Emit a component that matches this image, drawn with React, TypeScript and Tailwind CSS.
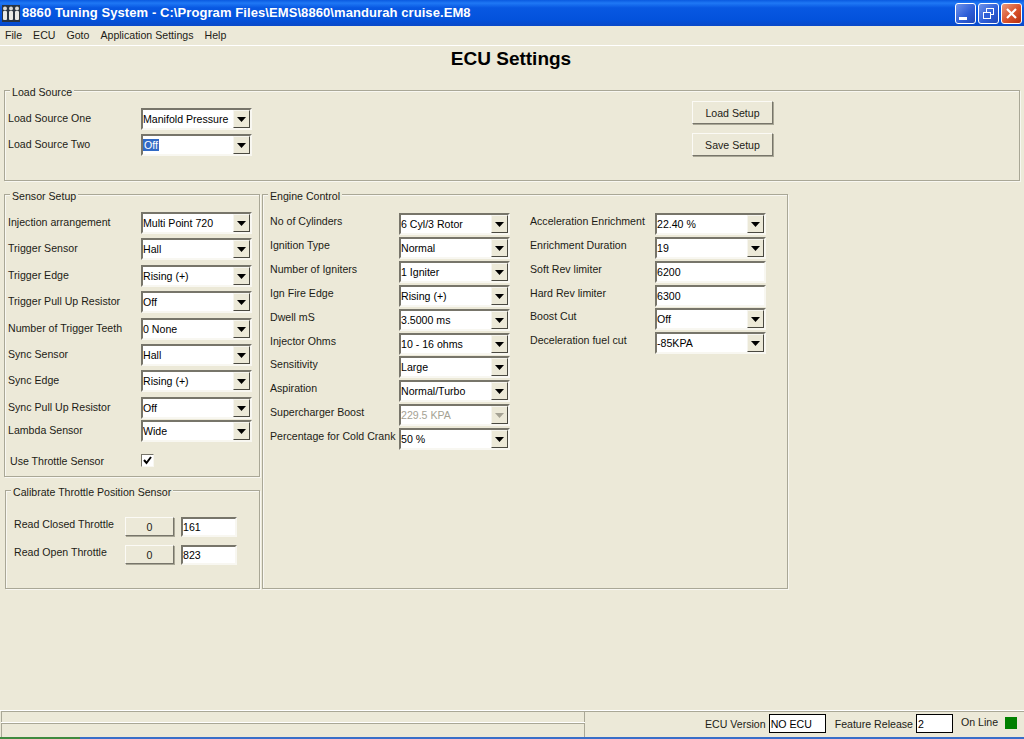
import type { ReactNode } from "react";

const font = "font-['Liberation_Sans',Arial,sans-serif]";

const sensorRows = [
  { label: "Injection arrangement", value: "Multi Point 720", gap: "mt-0" },
  { label: "Trigger Sensor", value: "Hall", gap: "mt-[4px]" },
  { label: "Trigger Edge", value: "Rising (+)", gap: "mt-[5px]" },
  { label: "Trigger Pull Up Resistor", value: "Off", gap: "mt-[4px]" },
  { label: "Number of Trigger Teeth", value: "0 None", gap: "mt-[5px]" },
  { label: "Sync Sensor", value: "Hall", gap: "mt-[4px]" },
  { label: "Sync Edge", value: "Rising (+)", gap: "mt-[4px]" },
  { label: "Sync Pull Up Resistor", value: "Off", gap: "mt-[5px]" },
  { label: "Lambda Sensor", value: "Wide", gap: "mt-[1px]" },
];

const engineRows = [
  { label: "No of Cylinders", value: "6 Cyl/3 Rotor", gap: "mt-0" },
  { label: "Ignition Type", value: "Normal", gap: "mt-[2px]" },
  { label: "Number of Igniters", value: "1 Igniter", gap: "mt-[2px]" },
  { label: "Ign Fire Edge", value: "Rising (+)", gap: "mt-[2px]" },
  { label: "Dwell mS", value: "3.5000 ms", gap: "mt-[2px]" },
  { label: "Injector Ohms", value: "10 - 16 ohms", gap: "mt-[2px]" },
  { label: "Sensitivity", value: "Large", gap: "mt-[1px]" },
  { label: "Aspiration", value: "Normal/Turbo", gap: "mt-[2px]" },
  { label: "Supercharger Boost", value: "229.5 KPA", gap: "mt-[2px]", disabled: true },
  { label: "Percentage for Cold Crank", value: "50 %", gap: "mt-[2px]" },
];

const enrichRows = [
  { label: "Acceleration Enrichment", value: "22.40 %", gap: "mt-0" },
  { label: "Enrichment Duration", value: "19", gap: "mt-[2px]" },
  { label: "Soft Rev limiter", value: "6200", gap: "mt-[2px]", text: true },
  { label: "Hard Rev limiter", value: "6300", gap: "mt-[2px]", text: true },
  { label: "Boost Cut", value: "Off", gap: "mt-[1px]" },
  { label: "Deceleration fuel cut", value: "-85KPA", gap: "mt-[2px]" },
];

const Sunken = ({ className, children }: { className: string; children: ReactNode }) => (
  <div
    className={`flex items-center border-2 border-t-[#77756a] border-l-[#77756a] border-b-[#f8f7f1] border-r-[#f8f7f1] bg-white text-black ${className}`}
  >
    {children}
  </div>
);

const Combo = ({
  value,
  disabled,
  selected,
}: {
  value: string;
  disabled?: boolean;
  selected?: boolean;
}) => (
  <Sunken className={`h-[22px] w-[111px] shrink-0 ${disabled ? "bg-[#ece9d8]" : ""}`}>
    <span className={`flex-1 truncate ${disabled ? "text-[#a5a294]" : ""}`}>
      {selected ? <span className="bg-[#316ac5] px-[1px] text-white">{value}</span> : value}
    </span>
    <span className="flex h-[18px] w-[17px] items-center justify-center border border-t-[#f6f5ef] border-l-[#f6f5ef] border-b-[#4a4941] border-r-[#4a4941] bg-[#ece9d8]">
      <svg width="9" height="5" viewBox="0 0 9 5">
        <polygon points="0,0 9,0 4.5,5" fill={disabled ? "#a5a294" : "#000"} />
      </svg>
    </span>
  </Sunken>
);

const Group = ({
  title,
  className,
  children,
}: {
  title: string;
  className: string;
  children: ReactNode;
}) => (
  <div className={`relative border border-[#a9a796] shadow-[inset_1px_1px_0_#f8f7f1,1px_1px_0_#f8f7f1] ${className}`}>
    <span className="absolute left-[5px] top-[-6px] bg-[#ece9d8] px-[2px] leading-[14px] text-[#1c1c16]">
      {title}
    </span>
    {children}
  </div>
);

const Button = ({ children, className }: { children: ReactNode; className: string }) => (
  <div
    className={`flex items-center justify-center border border-t-[#fbfaf5] border-l-[#fbfaf5] border-b-[#77756a] border-r-[#77756a] shadow-[1px_1px_0_#a9a796] ${className}`}
  >
    {children}
  </div>
);

const TitleButton = ({ children, red }: { children: ReactNode; red?: boolean }) => (
  <div
    className={`flex h-[21px] w-[21px] items-center justify-center rounded-[3px] border border-white ${
      red
        ? "bg-[linear-gradient(135deg,#e99a7c,#d9512a_55%,#b5300f)]"
        : "bg-[linear-gradient(135deg,#6f93ea,#2f5fd8_55%,#2148b8)]"
    }`}
  >
    {children}
  </div>
);

export default function App() {
  return (
    <div className={`${font} flex h-[739px] w-[1024px] flex-col overflow-hidden bg-[#ece9d8] text-[10.6px] leading-[14px] text-[#1c1c16]`}>
      {/* title bar */}
      <div className="flex h-[26px] shrink-0 items-center bg-[linear-gradient(180deg,#0a5ae0_0%,#1f78f5_12%,#0858e2_30%,#0352dc_75%,#0a49c8_100%)] pl-[2px] pr-[2px]">
        <svg width="18" height="17" viewBox="0 0 18 17" className="shrink-0">
          <rect width="18" height="17" fill="#2a3440" />
          <rect x="1" y="6" width="4" height="9" rx="1" fill="#e8e8e4" />
          <rect x="7" y="6" width="4" height="9" rx="1" fill="#e8e8e4" />
          <rect x="13" y="6" width="4" height="9" rx="1" fill="#e8e8e4" />
          <circle cx="3" cy="3.5" r="2" fill="#d8d8d4" />
          <circle cx="9" cy="3.5" r="2" fill="#d8d8d4" />
          <circle cx="15" cy="3.5" r="2" fill="#d8d8d4" />
        </svg>
        <span className="ml-[2px] whitespace-nowrap text-[13px] font-bold tracking-[0.08px] text-white">
          8860 Tuning System - C:\Program Files\EMS\8860\mandurah cruise.EM8
        </span>
        <div className="ml-auto flex gap-[2px]">
          <TitleButton>
            <span className="mr-[5px] mt-[10px] h-[3px] w-[8px] bg-white" />
          </TitleButton>
          <TitleButton>
            <svg width="13" height="13" viewBox="0 0 13 13" fill="none" stroke="#fff">
              <rect x="4.5" y="1.5" width="7" height="6" />
              <rect x="1.5" y="5.5" width="7" height="6" fill="#2f5fd8" />
            </svg>
          </TitleButton>
          <TitleButton red>
            <svg width="13" height="13" viewBox="0 0 13 13" stroke="#fff" strokeWidth="2.2">
              <path d="M2 2 L11 11 M11 2 L2 11" />
            </svg>
          </TitleButton>
        </div>
      </div>

      {/* menu */}
      <div className="flex h-[20px] shrink-0 items-center gap-[11px] border-b border-white pb-[2px] pl-[5px]">
        <span>File</span>
        <span>ECU</span>
        <span>Goto</span>
        <span>Application Settings</span>
        <span>Help</span>
      </div>

      <div className="flex flex-1 flex-col px-[4px]">
        <h1 className="mt-[1px] h-[24px] pr-[2px] text-center text-[19px] font-bold leading-[24px] text-black">
          ECU Settings
        </h1>

        {/* load source */}
        <Group title="Load Source" className="mt-[19px] flex h-[91px] w-[1016px] pl-[3px] pt-[17px]">
          <div className="flex flex-col gap-[4px]">
            <div className="flex items-center">
              <span className="w-[133px] pb-[2px]">Load Source One</span>
              <Combo value="Manifold Pressure" />
            </div>
            <div className="flex items-center">
              <span className="w-[133px] pb-[2px]">Load Source Two</span>
              <Combo value="Off" selected />
            </div>
          </div>
          <div className="ml-[440px] flex flex-col gap-[9px]">
            <Button className="-mt-[7px] h-[23px] w-[81px]">Load Setup</Button>
            <Button className="h-[23px] w-[81px]">Save Setup</Button>
          </div>
        </Group>

        <div className="mt-[13px] flex">
          <div className="w-[256px]">
            {/* sensor setup */}
            <Group title="Sensor Setup" className="h-[283px] pl-[3px] pt-[17px]">
              {sensorRows.map((row) => (
                <div key={row.label} className={`flex items-center ${row.gap}`}>
                  <span className="w-[133px] pb-[2px]">{row.label}</span>
                  <Combo value={row.value} />
                </div>
              ))}
              <div className="mt-[12px] flex h-[13px] items-center">
                <span className="ml-[2px] w-[131px] whitespace-nowrap">Use Throttle Sensor</span>
                <span className="flex h-[13px] w-[13px] items-center justify-center border border-t-[#77756a] border-l-[#77756a] border-b-[#f8f7f1] border-r-[#f8f7f1] bg-white">
                  <svg width="9" height="9" viewBox="0 0 9 9" fill="none" stroke="#000" strokeWidth="2">
                    <path d="M1 4 L3.5 7 L8 1" />
                  </svg>
                </span>
              </div>
            </Group>

            {/* throttle calibration */}
            <Group title="Calibrate Throttle Position Sensor" className="ml-[1px] mt-[13px] h-[99px] w-[255px] pl-[8px] pt-[26px]">
              <div className="flex items-center">
                <span className="w-[111px] whitespace-nowrap pb-[6px]">Read Closed Throttle</span>
                <Button className="h-[19px] w-[49px] self-start">0</Button>
                <Sunken className="ml-[7px] h-[20px] w-[56px]">161</Sunken>
              </div>
              <div className="mt-[8px] flex items-center">
                <span className="w-[111px] whitespace-nowrap pb-[6px]">Read Open Throttle</span>
                <Button className="h-[19px] w-[49px] self-start">0</Button>
                <Sunken className="ml-[7px] h-[20px] w-[56px]">823</Sunken>
              </div>
            </Group>
          </div>

          {/* engine control */}
          <Group title="Engine Control" className="ml-[2px] flex h-[395px] w-[526px] pl-[7px] pt-[18px]">
            <div className="flex w-[260px] flex-col">
              {engineRows.map((row) => (
                <div key={row.label} className={`flex items-center ${row.gap}`}>
                  <span className="w-[129px] whitespace-nowrap pb-[6px]">{row.label}</span>
                  <Combo value={row.value} disabled={row.disabled} />
                </div>
              ))}
            </div>
            <div className="flex w-[240px] flex-col">
              {enrichRows.map((row) => (
                <div key={row.label} className={`flex items-center ${row.gap}`}>
                  <span className="w-[125px] whitespace-nowrap pb-[6px]">{row.label}</span>
                  {row.text ? (
                    <Sunken className="h-[22px] w-[111px]">{row.value}</Sunken>
                  ) : (
                    <Combo value={row.value} />
                  )}
                </div>
              ))}
            </div>
          </Group>
        </div>
      </div>

      {/* status bar */}
      <div className="flex h-[27px] shrink-0 border-t border-white">
        <div className="flex h-full w-[585px] flex-col pl-[1px]">
          <div className="h-[12px] border-l border-r border-t border-[#a9a796]" />
          <div className="h-[14px] border-l border-r border-t border-[#a9a796] shadow-[0_-1px_0_#fff]" />
        </div>
        <div className="flex flex-1 items-center whitespace-nowrap border-t border-[#a9a796] pb-[2px] pl-[120px]">
          <span>ECU Version</span>
          <span className="ml-[3px] flex h-[19px] w-[57px] items-center border border-black bg-white pl-[1px] text-black">
            NO ECU
          </span>
          <span className="ml-[9px]">Feature Release</span>
          <span className="ml-[3px] flex h-[19px] w-[37px] items-center border border-black bg-white pl-[1px] text-black">
            2
          </span>
          <span className="ml-[8px] pb-[4px]">On Line</span>
          <span className="mb-[1px] ml-[7px] h-[12px] w-[12px] bg-[#008000]" />
        </div>
      </div>
      <div className="flex h-[2px] shrink-0 bg-[#3a6ec8]">
        <div className="h-full w-[80px] bg-[#3f8a3f]" />
      </div>
    </div>
  );
}
